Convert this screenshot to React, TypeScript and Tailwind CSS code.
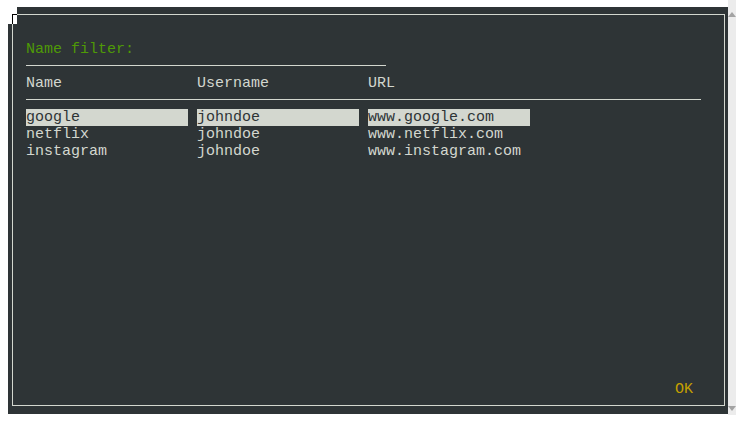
import React from 'react';

const rows = [
  { name: 'google', user: 'johndoe', url: 'www.google.com', selected: true },
  { name: 'netflix', user: 'johndoe', url: 'www.netflix.com', selected: false },
  { name: 'instagram', user: 'johndoe', url: 'www.instagram.com', selected: false },
];

const mono = { fontFamily: '"Liberation Mono", "DejaVu Sans Mono", monospace' };

function Cell({ text, selected }: { text: string; selected: boolean }) {
  return (
    <div
      className={`w-[162px] mr-[9px] h-[17px] whitespace-pre ${
        selected ? 'bg-[#d3d7cf] text-[#2e3436]' : 'text-[#d3d7cf]'
      }`}
    >
      {text}
    </div>
  );
}

export default function App() {
  return (
    <div className="w-[736px] h-[422px] bg-white flex pt-[7px] pl-[8px]" style={mono}>
      {/* terminal */}
      <div className="relative w-[720px] h-[407px] bg-[#2e3436] text-[15px] leading-[17px] text-[#d3d7cf]">
        {/* cursor cell */}
        <div className="absolute left-0 top-0 w-[9px] h-[17px] bg-white">
          <div className="absolute left-[4px] top-[7px] w-[5px] h-[10px] border-l border-t border-black" />
        </div>

        {/* dialog frame */}
        <div className="ml-[4px] mt-[7px] w-[713px] h-[392px] border border-[#d3d7cf] flex flex-col pl-[13px] pt-[26px] pr-[13px] pb-[7px]">
          <div className="h-[17px] text-[#4e9a06]">Name filter:</div>
          <div className="h-[17px] pt-[7px]">
            <div className="w-[360px] border-t border-[#d3d7cf]" />
          </div>
          <div className="flex h-[17px]">
            <Cell text="Name" selected={false} />
            <Cell text="Username" selected={false} />
            <Cell text="URL" selected={false} />
          </div>
          <div className="h-[17px] pt-[7px]">
            <div className="w-[675px] border-t border-[#d3d7cf]" />
          </div>
          {rows.map((r) => (
            <div key={r.name} className="flex h-[17px]">
              <Cell text={r.name} selected={r.selected} />
              <Cell text={r.user} selected={r.selected} />
              <Cell text={r.url} selected={r.selected} />
            </div>
          ))}
          <div className="flex-1" />
          <div className="h-[17px] flex justify-end pr-[18px] text-[#c4a000]">OK</div>
        </div>
      </div>

      {/* scrollbar */}
      <div className="w-[8px] h-[415px] -mt-[7px] bg-[#ececec] flex flex-col items-center justify-between pt-[12px] pb-[4px]">
        <svg width="8" height="5" viewBox="0 0 8 5">
          <path d="M4 0 L8 5 L0 5 Z" fill="#a3a3a3" />
        </svg>
        <svg width="8" height="5" viewBox="0 0 8 5">
          <path d="M0 0 L8 0 L4 5 Z" fill="#a3a3a3" />
        </svg>
      </div>
    </div>
  );
}
